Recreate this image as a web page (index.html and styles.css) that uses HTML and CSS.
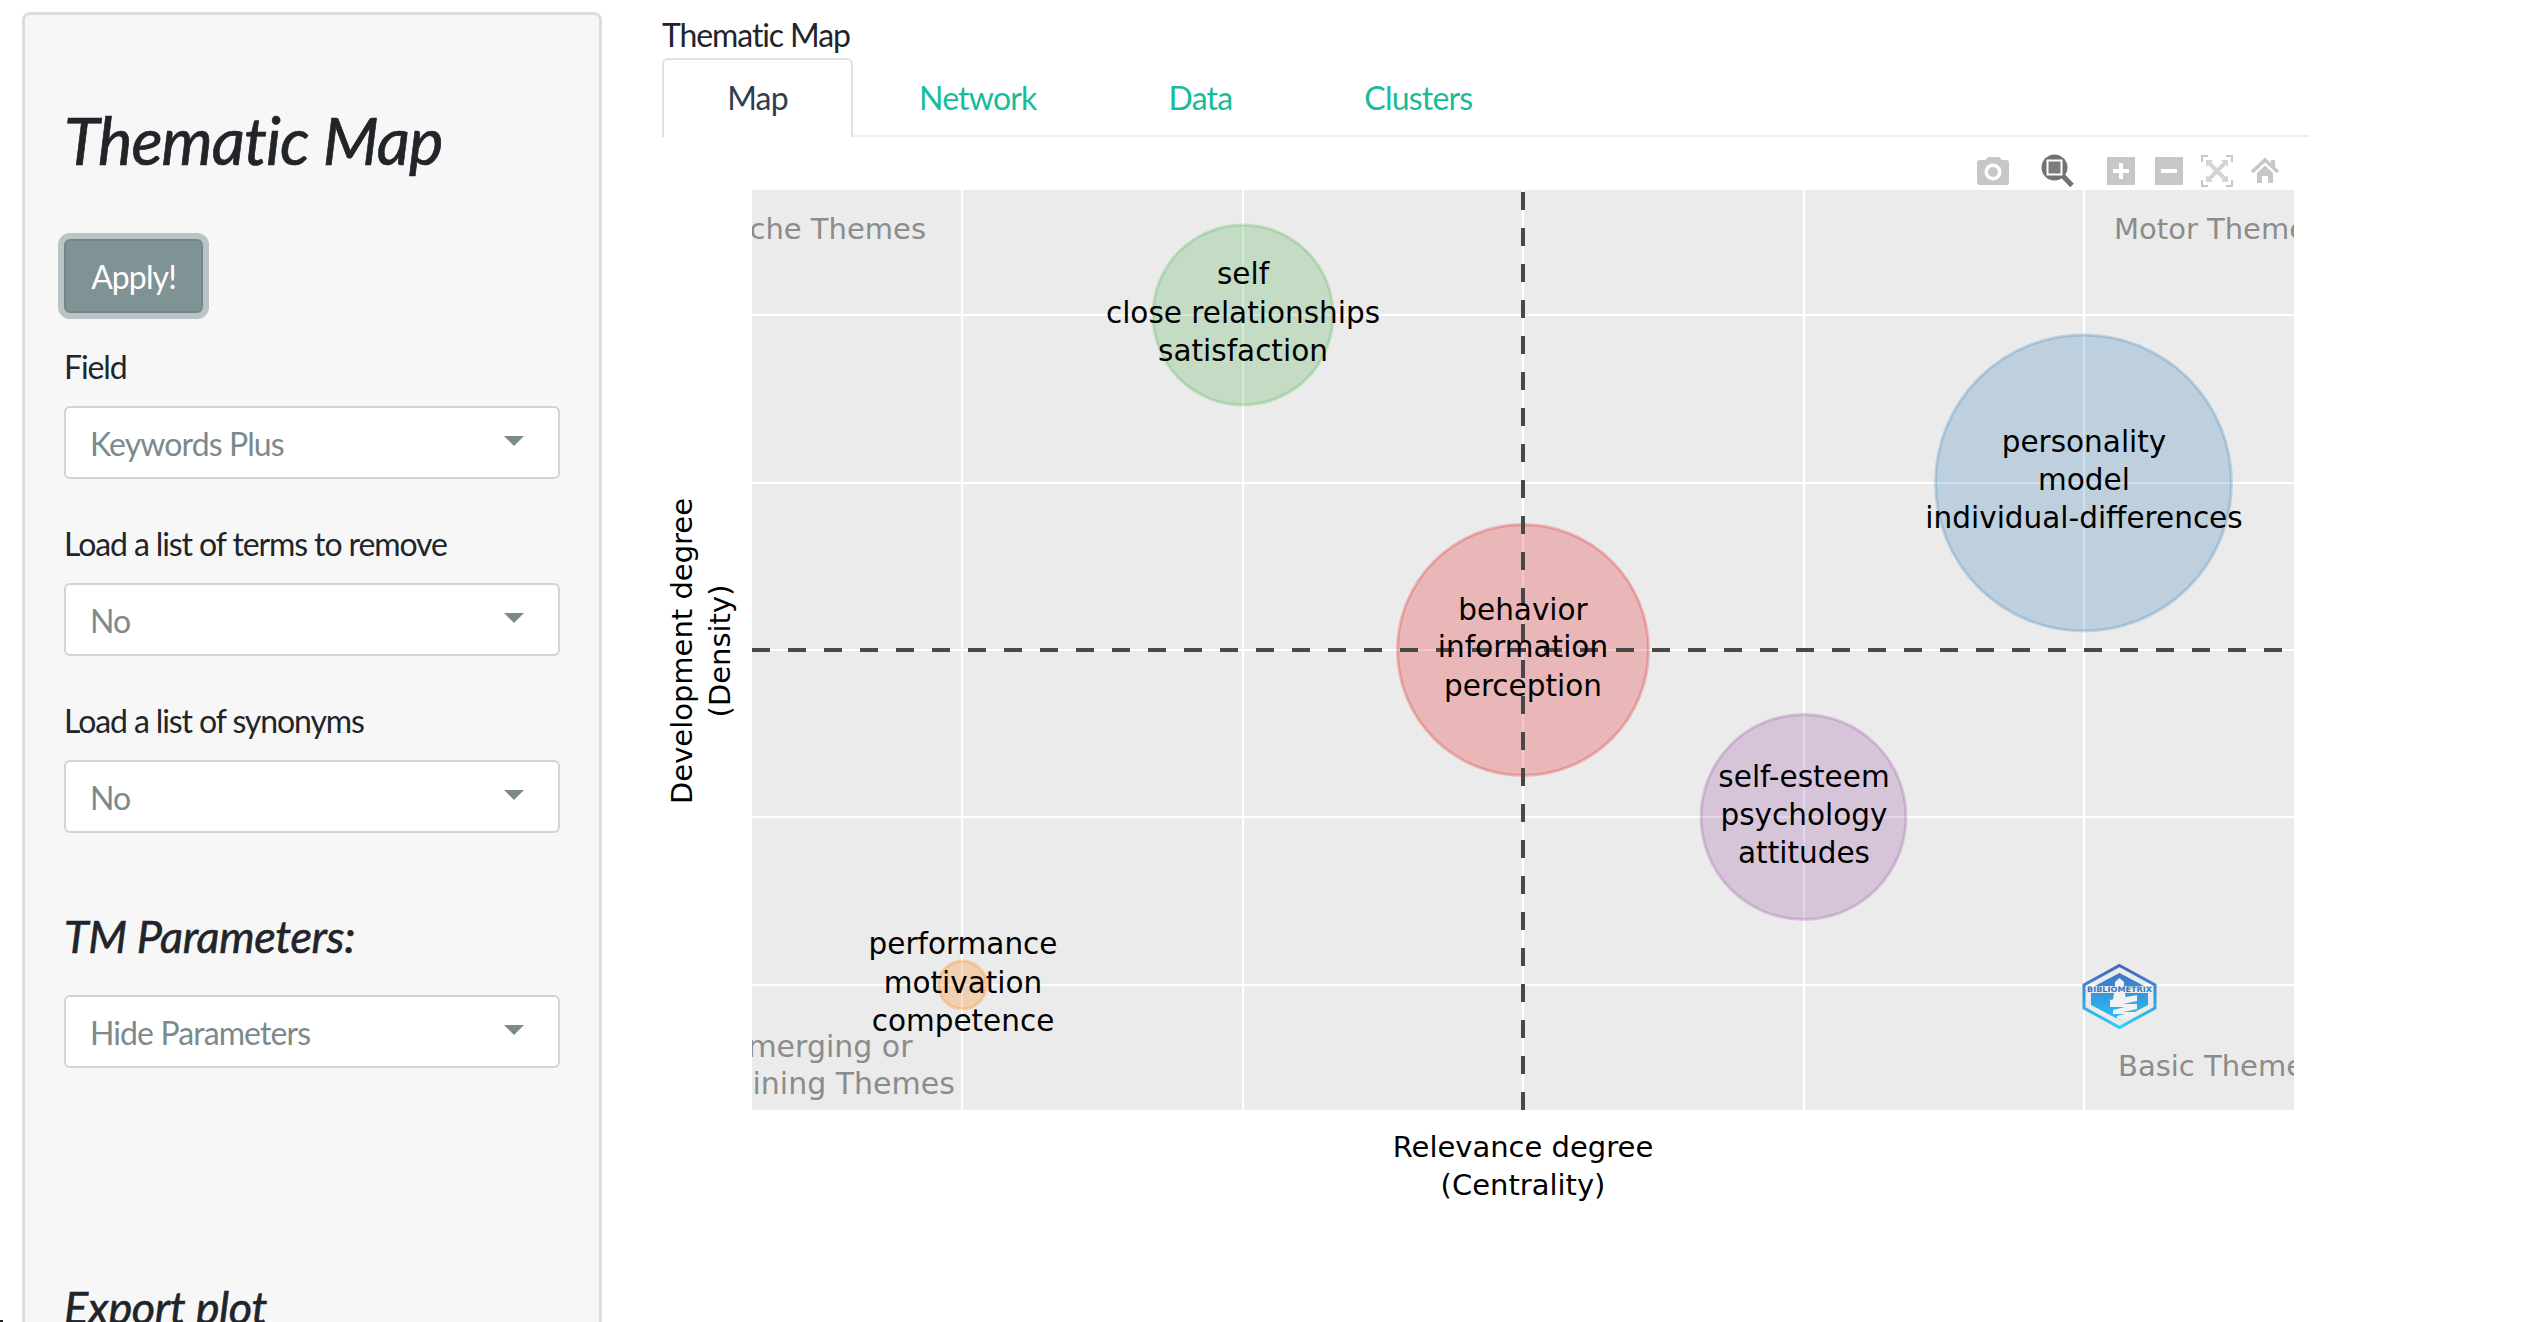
FILE: index.html
```html
<!DOCTYPE html>
<html lang="en">
<head>
    <meta charset="UTF-8">
    <title>Thematic Map</title>
    <link rel="stylesheet" href="styles.css">
</head>
<body>
    <div class="page">
        <aside class="sidebar">
            <h2 class="side-title">Thematic Map</h2>
            <button class="apply-button">Apply!</button>

            <label class="field-label">Field</label>
            <div class="select-box">Keywords Plus</div>

            <label class="field-label">Load a list of terms to remove</label>
            <div class="select-box">No</div>

            <label class="field-label">Load a list of synonyms</label>
            <div class="select-box">No</div>

            <h3 class="side-heading">TM Parameters:</h3>
            <div class="select-box">Hide Parameters</div>

            <h3 class="side-heading export-heading">Export plot</h3>
        </aside>

        <main class="content">
            <div class="content-title">Thematic Map</div>
            <nav class="tabs">
                <a class="tab active">Map</a>
                <a class="tab tab-network">Network</a>
                <a class="tab tab-data">Data</a>
                <a class="tab tab-clusters">Clusters</a>
            </nav>

            <div class="plot">
                <svg class="plot-svg" width="1864" height="1185" viewBox="662 137 1864 1185">
                    <defs>
                        <clipPath id="plotArea"><rect x="752" y="190" width="1542" height="920"/></clipPath>
                        <linearGradient id="logoBlue" x1="0" y1="0" x2="0" y2="1">
                            <stop offset="0" stop-color="#4a62b8"/>
                            <stop offset="1" stop-color="#2bd0fb"/>
                        </linearGradient>
                        <linearGradient id="logoFill" x1="0" y1="0" x2="0" y2="1">
                            <stop offset="0" stop-color="#4172c6"/>
                            <stop offset="1" stop-color="#27c4f8"/>
                        </linearGradient>
                    </defs>

                    <!-- toolbar -->
                    <g fill="#c7c7c7">
                        <path d="M1977 163 a3 3 0 0 1 3-3 h5 l3-3 h11 l3 3 h4 a3 3 0 0 1 3 3 v19 a3 3 0 0 1-3 3 h-26 a3 3 0 0 1-3-3 z"/>
                        <circle cx="1993" cy="172" r="8.500" fill="#fff"/>
                        <circle cx="1993" cy="172" r="5"/>
                        <rect x="2107" y="157" width="28" height="28"/>
                        <rect x="2155" y="157" width="28" height="28"/>
                        <path d="M2257 173 L2265 165.500 L2273 173 V183 H2268 V176 H2262 V183 H2257 Z"/>
                        <rect x="2271" y="160" width="4" height="7"/>
                    </g>
                    <path d="M2252 172 L2265 160 L2278 172" fill="none" stroke="#c7c7c7" stroke-width="3.500"/>
                    <g fill="#fff">
                        <rect x="2113" y="169" width="16" height="4"/>
                        <rect x="2119" y="163" width="4" height="16"/>
                        <rect x="2161" y="169" width="16" height="4"/>
                    </g>
                    <path d="M2208 156 h-6 v6 M2226 156 h6 v6 M2208 186 h-6 v-6 M2226 186 h6 v-6" fill="none" stroke="#c7c7c7" stroke-width="2"/>
                    <path d="M2209 163 l16 16 M2225 163 l-16 16" stroke="#d4d4d4" stroke-width="4"/>
                    <path d="M2206 160 h7 l-7 7 z M2228 160 h-7 l7 7 z M2206 182 h7 l-7 -7 z M2228 182 h-7 l7 -7 z" fill="#d4d4d4"/>
                    <g>
                        <circle cx="2054.500" cy="167.500" r="13" fill="#727272"/>
                        <rect x="2047.500" y="160.500" width="14" height="14" fill="#7c7c7c" stroke="#fff" stroke-width="2"/>
                        <path d="M2063 176 l9 9.500" stroke="#727272" stroke-width="5"/>
                    </g>

                    <!-- plot area -->
                    <rect x="752" y="190" width="1542" height="920" fill="#ebebeb"/>
                    <g stroke="#fff" stroke-width="2">
                        <path d="M962 190 V1110 M1243 190 V1110 M1523 190 V1110 M1804 190 V1110 M2084 190 V1110"/>
                        <path d="M752 315 H2294 M752 483 H2294 M752 650 H2294 M752 817 H2294 M752 985 H2294"/>
                    </g>

                    <g stroke-width="3">
                        <circle cx="1243" cy="315" r="90" fill="#4daf4a" fill-opacity="0.25" stroke="#4daf4a" stroke-opacity="0.25"/>
                        <circle cx="2083.500" cy="483" r="148" fill="#377eb8" fill-opacity="0.25" stroke="#377eb8" stroke-opacity="0.25"/>
                        <circle cx="1523" cy="650" r="125.500" fill="#e41a1c" fill-opacity="0.25" stroke="#e41a1c" stroke-opacity="0.25"/>
                        <circle cx="1803.500" cy="817" r="102.500" fill="#984ea3" fill-opacity="0.25" stroke="#984ea3" stroke-opacity="0.25"/>
                        <circle cx="962.500" cy="985" r="24" fill="#ff7f00" fill-opacity="0.25" stroke="#ff7f00" stroke-opacity="0.25"/>
                    </g>

                    <g stroke="#484848" stroke-width="4" stroke-dasharray="18 18">
                        <path d="M1523 192 V1110"/>
                        <path d="M752 650 H2284"/>
                    </g>

                    <g clip-path="url(#plotArea)" class="quadrant">
                        <text x="926" y="239" text-anchor="end">Niche Themes</text>
                        <text x="2114" y="239">Motor Themes</text>
                        <text class="wide" x="820.500" y="1057" text-anchor="middle">Emerging or</text>
                        <text class="wide" x="820.500" y="1094" text-anchor="middle">Declining Themes</text>
                        <text x="2118" y="1076">Basic Themes</text>
                    </g>

                    <g class="cluster" text-anchor="middle">
                        <text x="1243" y="284">self</text>
                        <text x="1243" y="323">close relationships</text>
                        <text x="1243" y="361">satisfaction</text>
                        <text x="2084" y="452">personality</text>
                        <text x="2084" y="490">model</text>
                        <text x="2084" y="528">individual-differences</text>
                        <text x="1523" y="620">behavior</text>
                        <text x="1523" y="657">information</text>
                        <text x="1523" y="696">perception</text>
                        <text x="1804" y="787">self-esteem</text>
                        <text x="1804" y="825">psychology</text>
                        <text x="1804" y="863">attitudes</text>
                        <text x="963" y="954">performance</text>
                        <text x="963" y="993">motivation</text>
                        <text x="963" y="1031">competence</text>
                    </g>

                    <g class="axis-title" text-anchor="middle">
                        <text x="1523" y="1157">Relevance degree</text>
                        <text x="1523" y="1195">(Centrality)</text>
                        <text transform="translate(692 651) rotate(-90)">Development degree</text>
                        <text transform="translate(730 651) rotate(-90)">(Density)</text>
                    </g>

                    <!-- logo -->
                    <g>
                        <path d="M2119.500 965.500 L2155 985 V1008 L2119.500 1027.500 L2084 1008 V985 Z" fill="none" stroke="url(#logoBlue)" stroke-width="3"/>
                        <path d="M2119.500 973 L2148 988 V1005 L2119.500 1020 L2091 1005 V988 Z" fill="url(#logoFill)"/>
                        <rect x="2086" y="986" width="67" height="7" fill="#ebebeb"/>
                        <path d="M2115 986 v-4 l4.500 -4 l4.500 4 v4 l2 14 h-13 z" fill="#f2f2f2"/>
                        <path d="M2110 1000 l27 -5 v6 l-14 3 h14 v5 l-14 3 h12 v4 l-18 4 v-4 l8 -2 h-12 v-4 l12 -3 h-15 z" fill="#f2f2f2"/>
                        <text class="logo-text" x="2087" y="992" textLength="65" lengthAdjust="spacingAndGlyphs">BIBLIOMETRIX</text>
                    </g>
                </svg>
            </div>
        </main>
    </div>
    <div class="corner-mark"></div>
</body>
</html>
```

FILE: styles.css
```css
html, body {
    margin: 0;
    height: 100%;
    overflow: hidden;
    background: #fff;
}

body {
    font-family: Lato, sans-serif;
    color: #212529;
    letter-spacing: -0.9px;
}

.page {
    display: flex;
    align-items: flex-start;
    height: 1322px;
    overflow: hidden;
}

.sidebar {
    box-sizing: border-box;
    flex: none;
    width: 580px;
    height: 1400px;
    margin: 12px 0 0 22px;
    padding: 87px 40px 0 39px;
    background: #f7f7f7;
    border: 3px solid #dcdcdc;
    border-radius: 8px;
}

.side-title {
    margin: 0 0 61px 0;
    font-size: 65px;
    font-weight: 400;
    font-style: italic;
    line-height: 76px;
    letter-spacing: -1px;
    -webkit-text-stroke: 0.7px #212529;
}

.apply-button {
    display: block;
    width: 139px;
    height: 74px;
    margin: 0 0 34px 0;
    padding: 0;
    color: #fff;
    font-family: Lato, sans-serif;
    font-size: 32px;
    letter-spacing: -0.9px;
    background: #7f9294;
    border: 2px solid #758688;
    border-radius: 6px;
    box-shadow: 0 0 0 6px #bac3c5;
}

.field-label {
    display: block;
    margin-bottom: 19px;
    font-size: 32px;
    line-height: 40px;
    letter-spacing: -1.1px;
}

.select-box {
    box-sizing: border-box;
    position: relative;
    width: 496px;
    height: 73px;
    margin-bottom: 45px;
    padding: 0 24px;
    color: #7b8a8b;
    font-size: 32px;
    line-height: 71px;
    background: #fff;
    border: 2px solid #ced4da;
    border-radius: 6px;
}

/* the little arrow of the dropdown */
.select-box::after {
    content: "";
    position: absolute;
    top: 28px;
    right: 34px;
    border-top: 10px solid #7b8a8b;
    border-left: 10px solid transparent;
    border-right: 10px solid transparent;
}

.side-heading {
    margin: 76px 0 32px 0;
    font-size: 45px;
    font-weight: 400;
    font-style: italic;
    line-height: 54px;
    letter-spacing: -0.35px;
    -webkit-text-stroke: 0.6px #212529;
}

.export-heading {
    margin-top: 212px;
}

.content {
    flex: 1;
    margin-left: 60px;
}

.content-title {
    margin-top: 15px;
    font-size: 32px;
    line-height: 40px;
    letter-spacing: -1.1px;
}

.tabs {
    display: flex;
    height: 79px;
    margin-top: 3px;
    width: 1647px;
    box-sizing: border-box;
    border-bottom: 2px solid #ecf0f1;
}

.tab {
    box-sizing: border-box;
    height: 79px;
    color: #18bc9c;
    font-size: 32px;
    line-height: 79px;
    letter-spacing: -0.8px;
    text-align: center;
}

.tab.active {
    width: 191px;
    color: #2c3e50;
    line-height: 75px;
    background: #fff;
    border: 2px solid #dee2e6;
    border-bottom: 0;
    border-radius: 6px 6px 0 0;
}

.tab-network {
    margin-left: 66px;
}

.tab-data {
    margin-left: 132px;
}

.tab-clusters {
    margin-left: 132px;
}

.plot-svg {
    display: block;
    letter-spacing: 0;
}

.quadrant text {
    font-family: "DejaVu Sans", sans-serif;
    font-size: 29px;
    fill: #8c8c8c;
}

.quadrant .wide {
    font-size: 30px;
}

.cluster text {
    font-family: "DejaVu Sans", sans-serif;
    font-size: 29.5px;
    fill: #000;
}

.axis-title text {
    font-family: "DejaVu Sans", sans-serif;
    font-size: 29px;
    fill: #000;
}

.logo-text {
    font-family: "DejaVu Sans", sans-serif;
    font-size: 7.5px;
    font-weight: 700;
    fill: #2e78c8;
}

.corner-mark {
    position: absolute;
    left: 0;
    bottom: 0;
    width: 3px;
    height: 2px;
    background: #222;
}
```
